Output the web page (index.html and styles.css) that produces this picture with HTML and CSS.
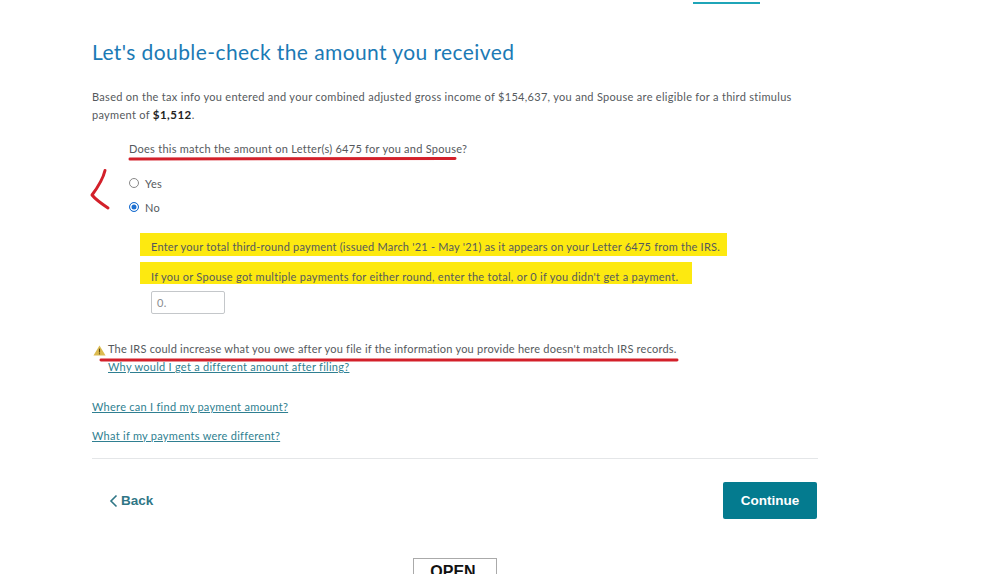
FILE: index.html
```html
<!DOCTYPE html>
<html lang="en">
<head>
<meta charset="utf-8">
<title>Stimulus check</title>
<link rel="stylesheet" href="styles.css">
</head>
<body>
<div class="page">
  <div class="tab-row"><span class="tab-line"></span></div>
  <main class="content">
    <h1 class="title">Let's double-check the amount you received</h1>
    <p class="intro">Based on the tax info you entered and your combined adjusted gross income of $154,637, you and Spouse are eligible for a third stimulus payment of <b>$1,512</b>.</p>
    <section class="question">
      <p class="ask">Does this match the amount on Letter(s) 6475 for you and Spouse?</p>
      <label class="radio"><span class="dot"></span>Yes</label>
      <label class="radio"><span class="dot on"></span>No</label>
      <div class="detail">
        <p class="hl">Enter your total third-round payment (issued March '21 - May '21) as it appears on your Letter 6475 from the IRS.</p>
        <p class="hl hl-second">If you or Spouse got multiple payments for either round, enter the total, or 0 if you didn't get a payment.</p>
        <div class="field">0.</div>
      </div>
    </section>
    <div class="warning">
      <svg class="warn-icon" viewBox="0 0 14 12" width="13" height="11"><path d="M7 0.5 L13.6 11.5 H0.4 Z" fill="#dcbb50"/><rect x="6.4" y="4" width="1.2" height="4.2" fill="#5c4a14"/><rect x="6.4" y="9" width="1.2" height="1.2" fill="#5c4a14"/></svg>
      <div class="warn-text">
        <p class="warn-line">The IRS could increase what you owe after you file if the information you provide here doesn't match IRS records.</p>
        <a href="#">Why would I get a different amount after filing?</a>
      </div>
    </div>
    <p class="help"><a href="#">Where can I find my payment amount?</a></p>
    <p class="help help-second"><a href="#">What if my payments were different?</a></p>
    <div class="actions">
      <a class="back" href="#"><svg viewBox="0 0 9 14" width="9" height="14"><path d="M7.5 1.5 L2 7 L7.5 12.5" fill="none" stroke="#2f7686" stroke-width="1.6"/></svg>Back</a>
      <button class="continue" type="button">Continue</button>
    </div>
    <div class="open-wrap"><div class="open">OPEN</div></div>
  </main>
</div>
<svg class="marks" viewBox="0 0 999 574" width="999" height="574">
  <path d="M130 159 C240 159.5 350 159.5 455 158.5" />
  <path d="M105 170.5 C103 179 98 187 92 195 C96 200 102 204 108 208" />
  <path d="M101 360 C300 361 500 361 677 360" />
</svg>
</body>
</html>
```
FILE: styles.css
```css
* { box-sizing: border-box; }
html, body { margin: 0; padding: 0; height: 574px; overflow: hidden; background: #fff; }
body { position: relative; font-family: "Lato", "Liberation Sans", sans-serif; color: #55595d; font-size: 11px; letter-spacing: .27px; }
p { margin: 0; }
a { color: #2f7f91; text-decoration: underline; }
.page { padding-left: 92px; width: 818px; }
.tab-row { height: 4px; display: flex; }
.tab-line { margin-left: 601px; width: 67px; height: 2px; margin-top: 2px; background: #1fa5b8; }
.title { margin: 0; padding-top: 33px; font-size: 21px; line-height: 30px; font-weight: 400; color: #1b7ab5; letter-spacing: .41px; }
.intro { margin-top: 21px; line-height: 18px; width: 726px; letter-spacing: .3px; }
.intro b { color: #222; font-weight: 700; font-size: 11.5px; letter-spacing: .5px; }
.question { padding-left: 37px; margin-top: 16px; }
.ask { line-height: 18px; letter-spacing: .26px; }
.radio { display: flex; align-items: center; height: 24px; gap: 6px; }
.ask + .radio { margin-top: 13px; }
.dot { width: 10px; height: 10px; border-radius: 50%; border: 1px solid #888; background: #fff; }
.dot.on { border-color: #1c6fd0; box-shadow: inset 0 0 0 1.5px #fff; background: #1c6fd0; }
.detail { padding-left: 11px; margin-top: 14px; }
.hl { display: block; width: fit-content; background: #fde910; height: 23px; line-height: 20px; padding: 4px 7px 0 11px; white-space: nowrap; letter-spacing: .22px; }
.hl-second { margin-top: 6px; height: 22px; padding: 5px 14px 0 11px; letter-spacing: .27px; }
.field { margin: 7px 0 0 11px; width: 74px; height: 23px; border: 1px solid #c4c7ca; border-radius: 2px; padding-left: 5px; line-height: 21px; color: #8a8d90; }
.warning { display: flex; gap: 2px; margin-top: 26px; margin-left: 1px; }
.warn-icon { margin-top: 5px; flex: none; }
.warn-text { line-height: 18px; }
.warn-line { letter-spacing: .22px; }
.help { margin-top: 22px; line-height: 18px; }
.help-second { margin-top: 11px; }
.actions { display: flex; justify-content: space-between; align-items: center; width: 726px; border-top: 1px solid #e4e6e8; margin-top: 13px; padding: 23px 1px 0 17px; }
.back { display: flex; align-items: center; gap: 3px; color: #2f7686; font-family: "Liberation Sans", sans-serif; font-weight: 700; font-size: 13.5px; text-decoration: none; letter-spacing: 0; }
.continue { width: 94px; height: 37px; border: 0; border-radius: 2px; background: #047b8f; color: #fff; font-family: "Liberation Sans", sans-serif; font-weight: 700; font-size: 13.5px; letter-spacing: 0; }
.open-wrap { width: 726px; margin-top: 39px; padding-left: 321px; }
.open { width: 84px; height: 40px; border: 1px solid #aaa; text-align: center; font-family: "Liberation Sans", sans-serif; font-weight: 700; font-size: 16px; line-height: 20px; padding: 3px 4px 0 0; color: #111; letter-spacing: 0; }
.marks { position: absolute; left: 0; top: 0; pointer-events: none; }
.marks path { fill: none; stroke: #d3202a; stroke-width: 3; stroke-linecap: round; stroke-linejoin: round; }
```
